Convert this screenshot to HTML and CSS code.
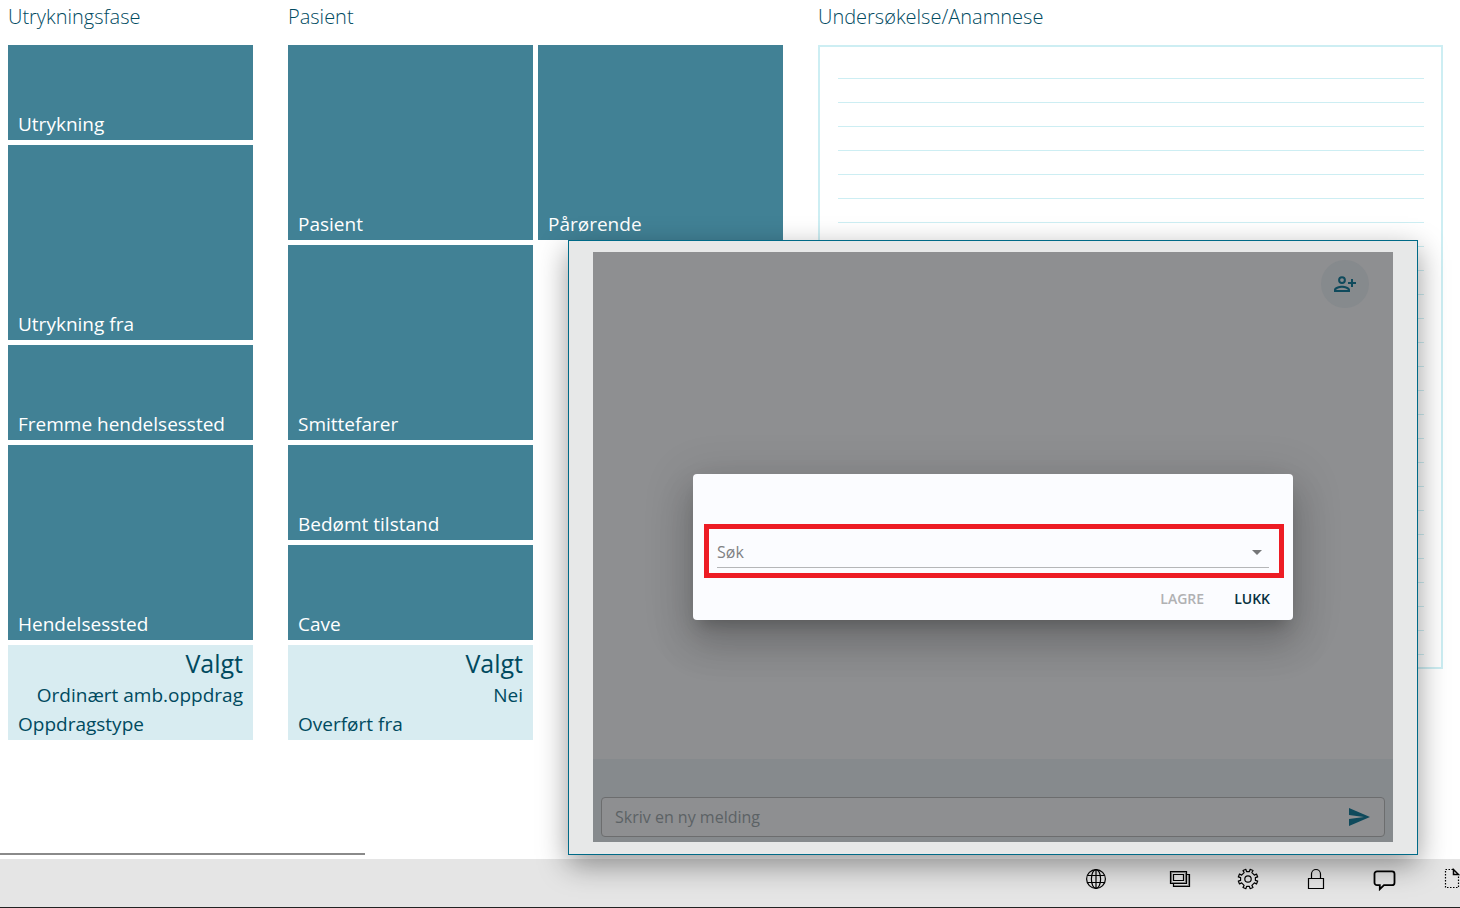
FILE: index.html
```html
<!DOCTYPE html>
<html lang="no">
<head>
<meta charset="utf-8">
<title>Ambulansejournal</title>
<link rel="stylesheet" href="styles.css">
</head>
<body>
<div class="app">
  <main class="board">
    <section class="group">
      <h2 class="group-title">Utrykningsfase</h2>
      <div class="tiles">
        <button class="tile">Utrykning</button>
        <button class="tile tile-tall">Utrykning fra</button>
        <button class="tile">Fremme hendelsessted</button>
        <button class="tile tile-tall">Hendelsessted</button>
        <button class="tile tile-chosen">
          <span class="tile-state">Valgt</span>
          <span class="tile-value">Ordinært amb.oppdrag</span>
          <span>Oppdragstype</span>
        </button>
      </div>
    </section>
    <section class="group">
      <h2 class="group-title">Pasient</h2>
      <div class="tiles tiles-double">
        <button class="tile tile-tall">Pasient</button>
        <button class="tile tile-tall">Pårørende</button>
        <button class="tile tile-tall tile-first">Smittefarer</button>
        <button class="tile tile-first">Bedømt tilstand</button>
        <button class="tile tile-first">Cave</button>
        <button class="tile tile-chosen tile-first">
          <span class="tile-state">Valgt</span>
          <span class="tile-value">Nei</span>
          <span>Overført fra</span>
        </button>
      </div>
    </section>
    <section class="group group-notes">
      <h2 class="group-title"><label for="notes">Undersøkelse/Anamnese</label></h2>
      <textarea class="notes" id="notes"></textarea>
    </section>
  </main>
  <div class="scroll-track"><div class="scroll-thumb"></div></div>
  <footer class="toolbar">
    <button class="tool tool-apart" aria-label="Nettverk">
      <svg class="tool-icon" viewBox="0 0 24 24"><circle cx="12" cy="12" r="9.400"/><ellipse cx="12" cy="12" rx="4.600" ry="9.400"/><path d="M12 2.600v18.800M3.500 8.500h17M3.500 15.500h17"/></svg>
    </button>
    <button class="tool" aria-label="Vinduer">
      <svg class="tool-icon" viewBox="0 0 24 24"><path class="soft" d="M3.500 5.500h14v10h-14zM20.500 8v10.500H6"/><path d="M2.500 4.500h16v12h-16zM5.500 7.500h10v6h-10zM18.500 7.500h3v12h-16v-3"/></svg>
    </button>
    <button class="tool" aria-label="Innstillinger">
      <svg class="tool-icon" viewBox="0 0 24 24"><circle cx="12" cy="12" r="3.200"/><path d="M10.600 4.600L9.900 2.300 7 3.500 8.100 5.600 5.600 8.100 3.500 7 2.300 9.900 4.600 10.600V13.400L2.300 14.100 3.500 17 5.600 15.900 8.100 18.400 7 20.500 9.900 21.700 10.600 19.400H13.400L14.100 21.700 17 20.500 15.900 18.400 18.400 15.900 20.500 17 21.700 14.100 19.400 13.400V10.600L21.700 9.900 20.500 7 18.400 8.100 15.900 5.600 17 3.500 14.100 2.300 13.400 4.600Z" stroke-linejoin="round"/></svg>
    </button>
    <button class="tool" aria-label="Lås">
      <svg class="tool-icon" viewBox="0 0 24 24"><path d="M4.500 11.500h15v10h-15zM7.500 11.500V7a4.500 4.500 0 0 1 9 0v4.500"/></svg>
    </button>
    <button class="tool" aria-label="Meldinger">
      <svg class="tool-icon tool-icon-bold" viewBox="0 0 24 24"><path d="M5 4.300h15a2.500 2.500 0 0 1 2.500 2.500v8.900a2.500 2.500 0 0 1-2.500 2.500h-8l-4.200 4v-4H5a2.500 2.500 0 0 1-2.500-2.500V6.800A2.500 2.500 0 0 1 5 4.300z"/></svg>
    </button>
    <button class="tool" aria-label="Dokument">
      <svg class="tool-icon" viewBox="0 0 24 24"><path d="M13 2.500H5.500v18h13V9" stroke-dasharray="1.500 1.500"/><path d="M13.500 2.500v5H18.500z" stroke-width="1.500"/></svg>
    </button>
  </footer>

  <aside class="popup">
    <div class="chat">
      <div class="chat-log">
        <button class="add-person" aria-label="Legg til person">
          <svg class="add-icon" viewBox="0 0 24 24"><path d="M9 4.200a3.900 3.900 0 1 0 0 7.800 3.900 3.900 0 0 0 0-7.800zm0 2a1.900 1.900 0 1 1 0 3.800 1.900 1.900 0 0 1 0-3.800zM9 13.800c-2.700 0-8 1.300-8 4V20h16v-2.200c0-2.700-5.300-4-8-4zM3 18c.5-1 3.300-2.200 6-2.200s5.500 1.200 6 2.200zM18 7h2v3h3v2h-3v3h-2v-3h-3v-2h3z"/></svg>
        </button>
      </div>
      <form class="compose">
        <div class="compose-box">
          <input class="compose-input" type="text" aria-label="Ny melding" placeholder="Skriv en ny melding">
          <button class="send" type="button" aria-label="Send">
            <svg class="send-icon" viewBox="0 0 24 24"><path d="M2 3l21 9-21 9v-7l15-2-15-2z"/></svg>
          </button>
        </div>
      </form>
      <div class="dialog" role="dialog" aria-label="Søk">
        <div class="search-frame">
          <div class="search-field">
            <input class="search-input" type="text" aria-label="Søk" placeholder="Søk">
            <svg class="search-arrow" viewBox="0 0 24 24"><path d="M7 10l5 5 5-5z"/></svg>
          </div>
        </div>
        <div class="dialog-actions">
          <button class="action" disabled>LAGRE</button>
          <button class="action">LUKK</button>
        </div>
      </div>
    </div>
  </aside>
</div>
</body>
</html>
```
FILE: styles.css
```css
* {
  box-sizing: border-box;
}

body {
  margin: 0;
  font-family: "Open Sans", "Noto Sans", sans-serif;
  color: #004a5f;
  background: #fff;
}

button,
input,
textarea {
  font: inherit;
  color: inherit;
  border: 0;
  padding: 0;
  background: none;
}

.app {
  position: relative;
  display: flex;
  flex-direction: column;
  height: 100vh;
  overflow: hidden;
}

.board {
  flex: 1;
  min-height: 0;
  overflow: hidden;
  display: flex;
  gap: 35px;
  padding: 0 17px 0 8px;
}

.group-notes {
  flex: 1;
}

.group-title {
  height: 45px;
  margin: 0;
  padding-top: 2px;
  font-size: 20px;
  font-weight: 300;
  line-height: 30px;
  white-space: nowrap;
}

.tiles {
  display: grid;
  grid-template-columns: 245px;
  grid-auto-rows: 95px;
  gap: 5px;
}

.tiles-double {
  grid-template-columns: 245px 245px;
}

.tile {
  display: flex;
  flex-direction: column;
  justify-content: flex-end;
  align-items: flex-start;
  padding: 0 10px 2px;
  font-size: 19px;
  line-height: 28px;
  text-align: left;
  white-space: nowrap;
  color: #fff;
  background: #418195;
}

.tile-tall {
  grid-row: span 2;
}

.tile-first {
  grid-column: 1;
}

.tile-chosen {
  color: #004a5f;
  background: #d8ecf1;
}

.tile-state,
.tile-value {
  align-self: flex-end;
}

.tile-value {
  line-height: 30px;
}

.tile-state {
  font-size: 25px;
  line-height: 34px;
}

.notes {
  display: block;
  width: 100%;
  height: 624px;
  padding: 8px 17px 12px 18px;
  border: 2px solid #cdeef3;
  font-size: 16px;
  line-height: 24px;
  resize: none;
  background: repeating-linear-gradient(transparent 0 23px, #cdeef3 23px 24px) content-box;
}

.scroll-track {
  height: 6px;
}

.scroll-thumb {
  width: 25%;
  height: 2px;
  background: #8a8a8a;
}

.toolbar {
  display: flex;
  justify-content: flex-end;
  height: 49px;
  padding-bottom: 8px;
  background: #e5e5e5;
  border-bottom: 1px solid #222;
}

.tool {
  flex: none;
  display: flex;
  justify-content: center;
  align-items: center;
  width: 68px;
}

.tool-apart {
  margin-right: 16px;
}

.tool:last-child {
  margin-right: -26px;
}

.tool-icon {
  width: 24px;
  height: 24px;
  fill: none;
  stroke: #000;
  stroke-width: 1.2;
}

.tool-icon-bold {
  stroke-width: 1.8;
}

.soft {
  stroke: #888;
}

.popup {
  position: absolute;
  right: 42px;
  bottom: 53px;
  width: 850px;
  height: 615px;
  padding: 11px 24px 12px;
  border: 1px solid #006a87;
  background: #e7e8e8;
  box-shadow: 0 10px 28px rgba(0, 0, 0, 0.4);
}

.chat {
  position: relative;
  display: flex;
  flex-direction: column;
  height: 100%;
  overflow: hidden;
  background: #8e8f91;
}

.chat-log {
  flex: 1;
  display: flex;
  justify-content: flex-end;
  align-items: flex-start;
  padding: 8px 24px;
}

.add-person {
  display: flex;
  justify-content: center;
  align-items: center;
  width: 48px;
  height: 48px;
  border-radius: 50%;
  background: #868a8d;
}

.add-icon,
.send-icon {
  width: 24px;
  height: 24px;
  fill: #0f4a5c;
}

.compose {
  padding: 38px 8px 5px;
  background: #868a8d;
}

.compose-box {
  display: flex;
  align-items: center;
  height: 40px;
  padding: 0 13px;
  border: 1px solid #6c6d6e;
  border-radius: 4px;
  background: #8e8f91;
}

.compose-input {
  flex: 1;
  font-size: 16px;
  line-height: 24px;
}

.compose-input::placeholder {
  color: #5c6265;
  opacity: 1;
}

.send {
  display: flex;
}

.dialog {
  position: absolute;
  top: 50%;
  left: 50%;
  width: 600px;
  padding: 50px 9px 2px 11px;
  transform: translate(-50%, -50%);
  border-radius: 4px;
  background: #fbfcff;
  box-shadow:
    0 11px 15px -7px rgba(0, 0, 0, 0.2),
    0 24px 38px 3px rgba(0, 0, 0, 0.14),
    0 9px 46px 8px rgba(0, 0, 0, 0.12);
}

.search-frame {
  height: 54px;
  padding: 7px 10px 5px 8px;
  border: 5px solid #ed1c24;
}

.search-field {
  display: flex;
  align-items: center;
  height: 32px;
  border-bottom: 1px solid #b5b6b8;
}

.search-input {
  flex: 1;
  font-size: 16px;
  line-height: 24px;
}

.search-input::placeholder {
  color: #808183;
  opacity: 1;
}

.search-arrow {
  width: 24px;
  height: 24px;
  fill: #757678;
}

.dialog-actions {
  display: flex;
  justify-content: flex-end;
  gap: 14px;
  padding-right: 6px;
}

.action {
  height: 40px;
  padding: 0 8px;
  font-size: 14px;
  font-weight: 600;
  color: #08303e;
}

.action:disabled {
  color: #b0b1b3;
}
```
